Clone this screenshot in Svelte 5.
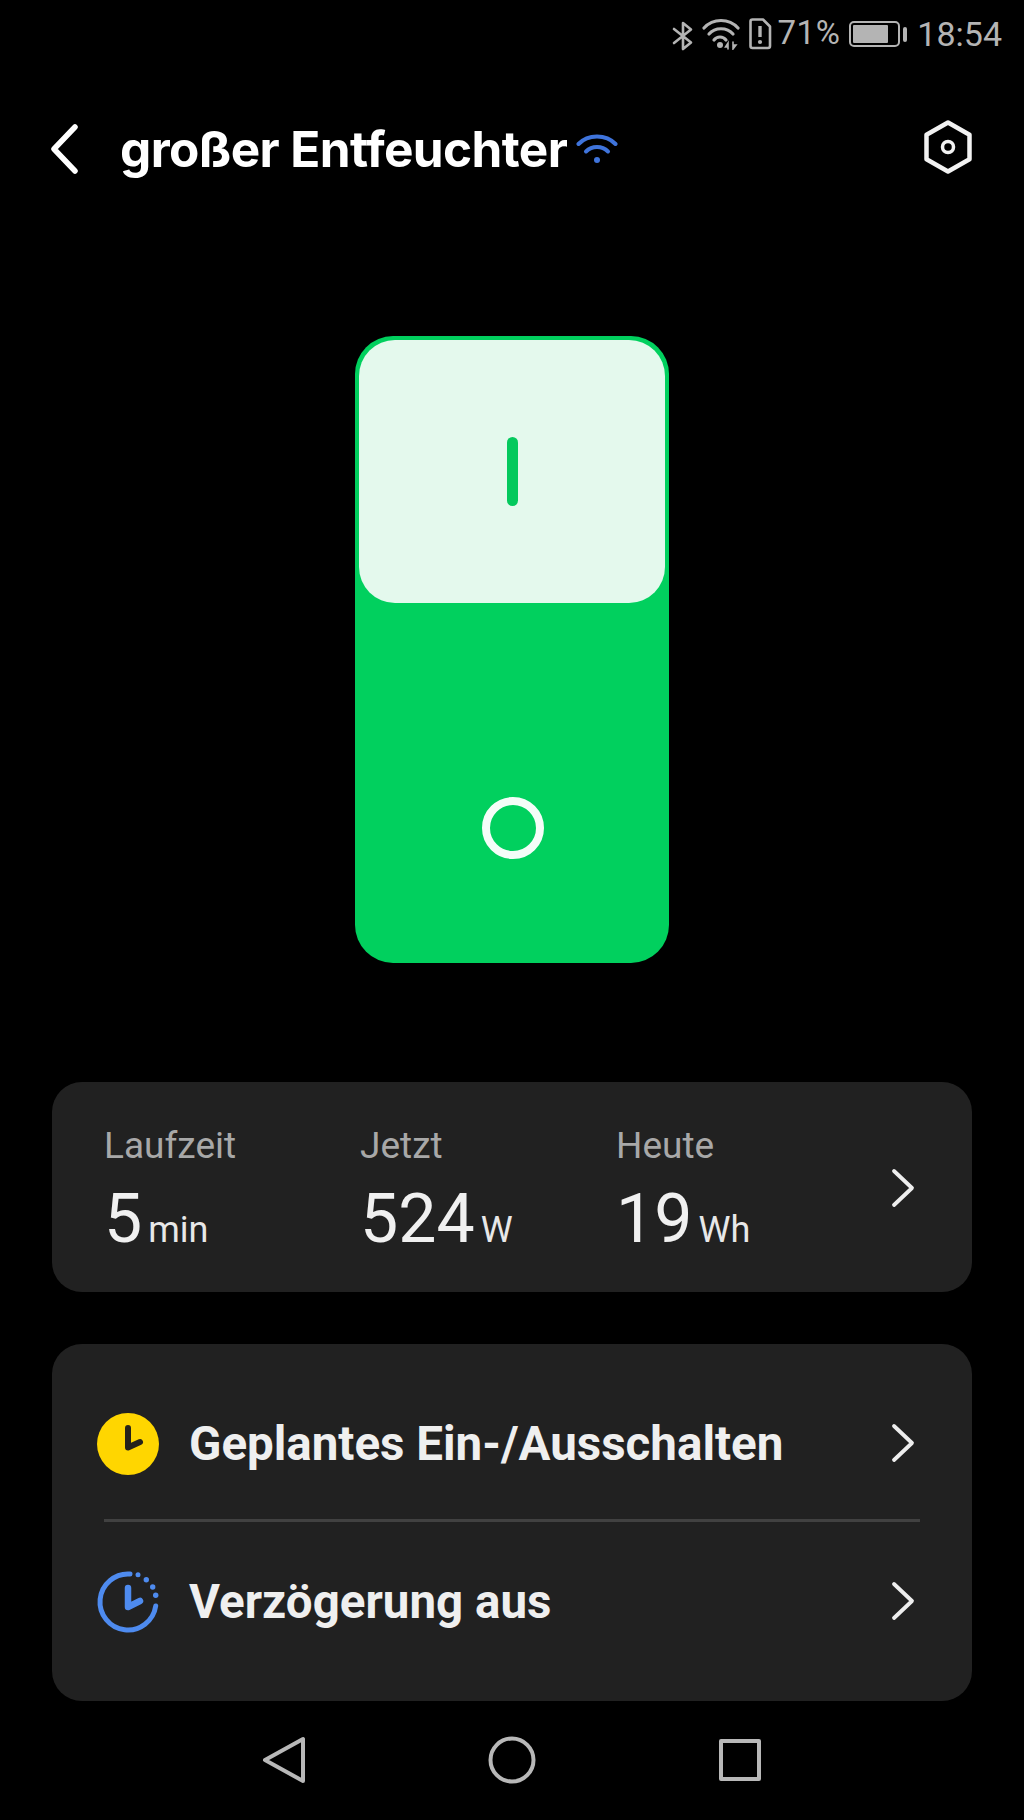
<script>
  const stats = [
    { label: 'Laufzeit', value: '5', unit: 'min' },
    { label: 'Jetzt', value: '524', unit: 'W' },
    { label: 'Heute', value: '19', unit: 'Wh' }
  ];
</script>

<div class="screen">
  <div class="status">
    <svg class="s-bt" width="22" height="30" viewBox="0 0 22 30" fill="none" stroke="#b4b4b4" stroke-width="2.6" stroke-linejoin="round" stroke-linecap="round">
      <path d="M2 8 L19 21.5 L11 28 V2 L19 8.5 L2 22" />
    </svg>
    <svg class="s-wifi" width="38" height="32" viewBox="0 0 38 32" fill="none" stroke="#b4b4b4" stroke-width="3.2" stroke-linecap="round">
      <path d="M2 10 C11 0 27 0 36 10" />
      <path d="M7 16 C13 9 25 9 31 16" />
      <path d="M12 22 C15 18 21 18 24 22" />
      <circle cx="18" cy="27" r="3" fill="#b4b4b4" stroke="none" />
      <path d="M26 31 V25 L23.5 29 H26 M31 24 V31 L34 27 H31" stroke-width="1.6" fill="#b4b4b4" />
    </svg>
    <svg class="s-sim" width="24" height="32" viewBox="0 0 24 32" fill="none" stroke="#b4b4b4" stroke-width="2.6" stroke-linejoin="round">
      <path d="M2.5 3.5 Q2.5 1.5 4.5 1.5 H15 L22 8.5 V28 Q22 30 20 30 H4.5 Q2.5 30 2.5 28 Z" />
      <path d="M12 8 V19" stroke-width="3.4" />
      <circle cx="12" cy="24" r="2.1" fill="#b4b4b4" stroke="none" />
    </svg>
    <span class="s-pct">71%</span>
    <div class="s-batt">
      <div class="s-shell"><div class="s-fill"></div></div>
      <div class="s-nub"></div>
    </div>
    <span class="s-time">18:54</span>
  </div>

  <header class="head">
    <svg class="back" width="30" height="50" viewBox="0 0 30 50" fill="none" stroke="#fff" stroke-width="5.500" stroke-linecap="round" stroke-linejoin="round">
      <path d="M25 3 L4 25 L25 47" />
    </svg>
    <h1>großer Entfeuchter</h1>
    <svg class="h-wifi" width="42" height="30" viewBox="0 0 42 30" fill="none" stroke="#3f74dc" stroke-width="4" stroke-linecap="round">
      <path d="M2.500 10 C12 0 30 0 39.500 10" />
      <path d="M10 17.500 C16 11.500 26 11.500 32 17.500" />
      <circle cx="21" cy="26" r="3" fill="#3f74dc" stroke="none" />
    </svg>
    <svg class="gear" width="50" height="54" viewBox="0 0 50 54" fill="none" stroke="#f2f2f2" stroke-width="4.500" stroke-linejoin="round">
      <path d="M25 2.500 L46.500 14.800 V39.200 L25 51.500 L3.500 39.200 V14.800 Z" />
      <circle cx="25" cy="27" r="5.500" stroke-width="3.500" />
    </svg>
  </header>

  <div class="switch">
    <div class="paddle"><div class="bar"></div></div>
    <div class="lower"><div class="ring"></div></div>
  </div>

  <section class="card stats">
    {#each stats as s}
      <div class="stat">
        <div class="label">{s.label}</div>
        <div class="reading"><span class="value">{s.value}</span><span class="unit">{s.unit}</span></div>
      </div>
    {/each}
    <svg class="chev" width="24" height="40" viewBox="0 0 24 40" fill="none" stroke="#eeeeee" stroke-width="3.800" stroke-linecap="round" stroke-linejoin="round">
      <path d="M3 3 L21 20 L3 37" />
    </svg>
  </section>

  <section class="card menu">
    <div class="row">
      <svg class="r-icon" width="66" height="66" viewBox="0 0 66 66" fill="none">
        <circle cx="33" cy="33" r="31" fill="#ffd600" />
        <path d="M33 17 V36.500 L45 31" stroke="#25221a" stroke-width="6" stroke-linecap="round" stroke-linejoin="round" />
      </svg>
      <span class="r-text">Geplantes Ein-/Ausschalten</span>
      <svg class="chev" width="24" height="40" viewBox="0 0 24 40" fill="none" stroke="#eeeeee" stroke-width="3.800" stroke-linecap="round" stroke-linejoin="round">
        <path d="M3 3 L21 20 L3 37" />
      </svg>
    </div>
    <div class="divider"></div>
    <div class="row">
      <svg class="r-icon" width="66" height="66" viewBox="0 0 66 66" fill="none">
        <path d="M35 5 A28 28 0 1 0 60.700 37" stroke="#4e8bef" stroke-width="5" stroke-linecap="round" />
        <circle cx="43" cy="5.700" r="2.500" fill="#4e8bef" />
        <circle cx="51.300" cy="10.700" r="2.700" fill="#4e8bef" />
        <circle cx="57.700" cy="18" r="2.700" fill="#4e8bef" />
        <circle cx="60.700" cy="26.300" r="2.700" fill="#4e8bef" />
        <path d="M33 19 V38 L45 32" stroke="#4e8bef" stroke-width="6.500" stroke-linecap="round" stroke-linejoin="round" />
      </svg>
      <span class="r-text">Verzögerung aus</span>
      <svg class="chev" width="24" height="40" viewBox="0 0 24 40" fill="none" stroke="#eeeeee" stroke-width="3.800" stroke-linecap="round" stroke-linejoin="round">
        <path d="M3 3 L21 20 L3 37" />
      </svg>
    </div>
  </section>

  <nav class="nav">
    <svg width="44" height="48" viewBox="0 0 44 48" fill="none" stroke="#b8b8b8" stroke-width="4" stroke-linejoin="round">
      <path d="M41 3 V45 L3 24 Z" />
    </svg>
    <svg width="48" height="48" viewBox="0 0 48 48" fill="none" stroke="#b8b8b8" stroke-width="4">
      <circle cx="24" cy="24" r="21.500" />
    </svg>
    <svg width="44" height="44" viewBox="0 0 44 44" fill="none" stroke="#b8b8b8" stroke-width="4" stroke-linejoin="round">
      <rect x="3" y="3" width="38" height="38" />
    </svg>
  </nav>
</div>

<style>
  :global(body) {
    margin: 0;
    background: #000;
  }
  .screen {
    width: 1024px;
    height: 1820px;
    background: #000;
    font-family: Roboto, "Liberation Sans", sans-serif;
    color: #f0f0f0;
    overflow: hidden;
  }
  .status {
    height: 68px;
    box-sizing: border-box;
    padding: 18px 22px 0 0;
    display: flex;
    justify-content: flex-end;
    align-items: flex-start;
    color: #b4b4b4;
  }
  .s-bt { margin-top: 3px; }
  .s-wifi { margin-left: 8px; }
  .s-sim { margin-left: 8px; }
  .s-pct {
    font-size: 33px;
    line-height: 30px;
    margin-left: 6px;
    letter-spacing: 0.5px;
  }
  .s-batt {
    display: flex;
    align-items: center;
    margin: 3px 0 0 9px;
    gap: 3px;
  }
  .s-shell {
    width: 51px;
    height: 26px;
    box-sizing: border-box;
    border: 2px solid #b4b4b4;
    border-radius: 5px;
    padding: 2px;
  }
  .s-fill {
    width: 35px;
    height: 100%;
    background: #b4b4b4;
    border-radius: 1px;
  }
  .s-nub {
    width: 4px;
    height: 15px;
    background: #b4b4b4;
    border-radius: 2px;
  }
  .s-time {
    font-size: 34px;
    line-height: 32px;
    margin-left: 10px;
  }
  .head {
    height: 90px;
    display: flex;
    align-items: center;
    padding-left: 50px;
    margin-top: 36px;
  }
  .back { flex: none; }
  h1 {
    margin: 0 0 0 40px;
    font-family: Inter, Roboto, sans-serif;
    font-size: 49.5px;
    font-weight: 700;
    line-height: 60px;
    color: #fff;
    letter-spacing: -0.6px;
    font-variant-ligatures: none;
    font-feature-settings: "liga" 0, "calt" 0;
  }
  .h-wifi { margin: 0 0 0 9px; }
  .gear { margin-left: auto; margin-right: 51px; margin-top: -4px; }
  .switch {
    width: 314px;
    height: 627px;
    margin: 142px auto 0;
    box-sizing: border-box;
    padding: 4px;
    background: #01d05e;
    border-radius: 38px;
    display: flex;
    flex-direction: column;
  }
  .paddle {
    height: 263px;
    flex: none;
    background: #e4f9ed;
    border-radius: 36px;
    display: flex;
    align-items: center;
    justify-content: center;
    padding-bottom: 0;
  }
  .bar {
    width: 11px;
    height: 69px;
    background: #04c95d;
    border-radius: 6px;
  }
  .lower {
    display: flex;
    justify-content: center;
    padding: 194px 0 0 2px;
  }
  .ring {
    width: 62px;
    height: 62px;
    box-sizing: border-box;
    border: 8px solid #f4fdf8;
    border-radius: 50%;
  }
  .card {
    width: 920px;
    margin: 0 auto;
    background: #212121;
    border-radius: 30px;
    box-sizing: border-box;
  }
  .stats {
    height: 210px;
    margin-top: 119px;
    padding: 42px 0 0 52px;
    display: flex;
    position: relative;
  }
  .stat { width: 256px; flex: none; }
  .label {
    font-size: 37px;
    line-height: 44px;
    color: #a8a8a8;
  }
  .reading {
    display: flex;
    align-items: baseline;
    margin: 14px 0 0 0;
  }
  .value {
    font-size: 68px;
    line-height: 74px;
    font-weight: 400;
    color: #f0f0f0;
  }
  .unit {
    font-size: 36px;
    color: #e8e8e8;
    margin-left: 6px;
  }
  .stats .chev {
    margin: 44px 0 0 19px;
  }
  .menu {
    height: 357px;
    margin-top: 52px;
    padding-top: 64px;
    display: flex;
    flex-direction: column;
  }
  .row {
    height: 72px;
    display: flex;
    align-items: center;
    padding-left: 43px;
  }
  .r-icon { flex: none; }
  .r-text {
    font-size: 47.5px;
    font-weight: 700;
    color: #efefef;
    margin-left: 28px;
    letter-spacing: 0;
  }
  .row .chev {
    margin-left: auto;
    margin-right: 57px;
    margin-top: -3px;
  }
  .divider {
    height: 3px;
    background: #414141;
    margin: 39px 52px 44px 52px;
  }
  .nav {
    display: grid;
    grid-template-columns: 44px 48px 44px;
    justify-content: start;
    align-items: center;
    column-gap: 182px;
    padding: 35px 0 0 262px;
  }
</style>
